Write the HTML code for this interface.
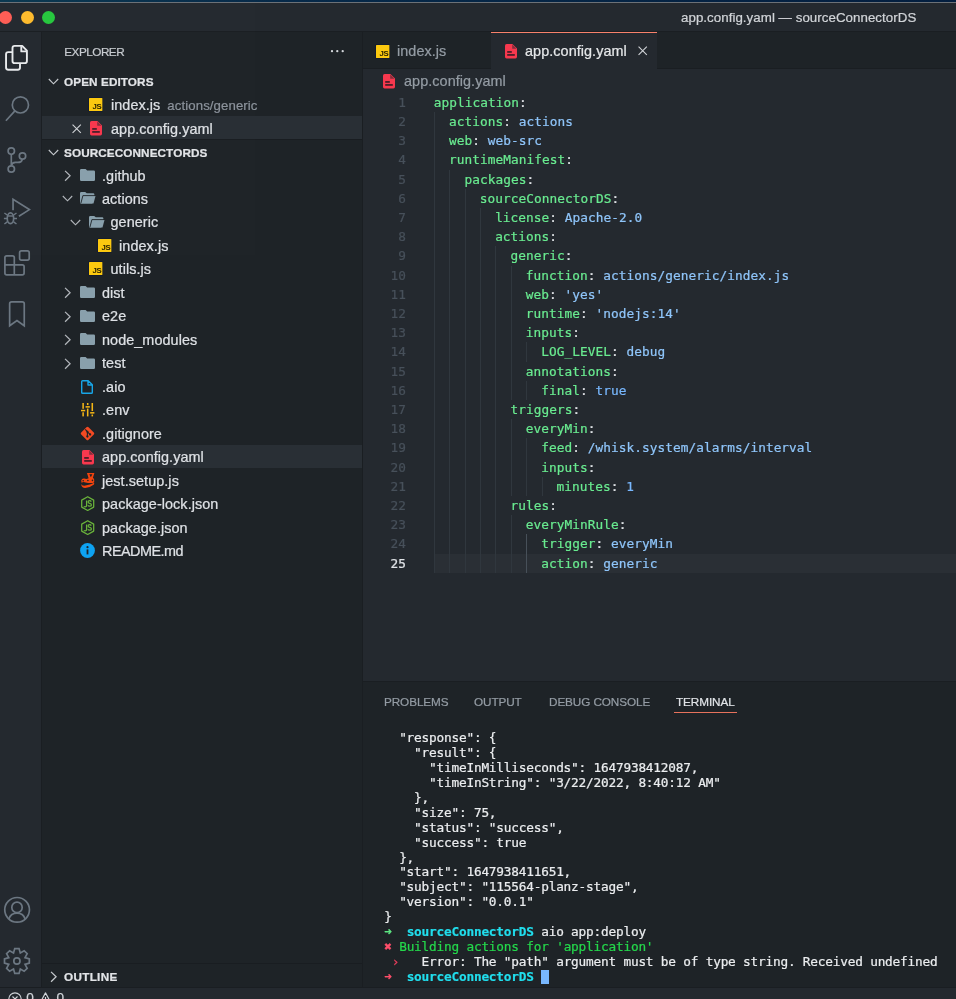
<!DOCTYPE html>
<html lang="en">
<head>
<meta charset="utf-8">
<title>app.config.yaml — sourceConnectorDS</title>
<style>
html,body{margin:0;padding:0;}
body{width:956px;height:999px;overflow:hidden;position:relative;background:#252a30;font-family:"Liberation Sans",sans-serif;font-size:14.4px;letter-spacing:.07px;color:#dfe2e6;-webkit-text-stroke:.22px;}
div,svg{position:absolute;box-sizing:border-box;}
#root{left:0;top:0;width:956px;height:999px;overflow:hidden;will-change:transform;opacity:.999;}
span{position:static;}
.ic{display:block;overflow:visible;}
#deskbg{left:0;top:0;width:956px;height:2px;background:linear-gradient(90deg,#0b3a52 0%,#072a4a 30%,#041f40 100%);}
#winedge{left:0;top:2px;width:956px;height:1px;background:#6d7278;}
#title{left:0;top:3px;width:956px;height:28px;background:#252a30;}
#titleline{left:0;top:31px;width:956px;height:1px;background:#1b1f23;}
#title .tt{left:681px;top:.5px;height:29px;line-height:28px;white-space:nowrap;color:#d2d5d9;font-size:13.3px;letter-spacing:.05px;}
.tl-dot{width:13px;height:13px;border-radius:50%;top:7.7px;}
#act{left:0;top:32px;width:42px;height:955px;background:#252a30;border-right:1px solid #1b1f23;}
#side{left:42px;top:32px;width:320px;height:955px;background:#1f2428;}
#sideitems{left:0;top:0;width:362px;height:999px;}
#vline{left:362px;top:32px;width:1px;height:955px;background:#1b1f23;}
#tabs{left:363px;top:32px;width:593px;height:37px;background:#1f2428;}
#tabline{left:363px;top:68px;width:593px;height:1px;background:#1b1f23;}
#tab2{left:491px;top:32px;width:166px;height:37.4px;background:#252a30;border-top:1.4px solid #f9826c;}
.tabt{top:33.1px;height:37px;line-height:37px;white-space:nowrap;}
#editor{left:363px;top:69px;width:593px;height:612px;background:#252a30;}
.bc{left:404px;top:70.4px;height:23.47px;line-height:23.47px;color:#959da5;white-space:nowrap;}
#panel{left:363px;top:681px;width:593px;height:306px;background:#1f2428;border-top:1px solid #1b1f23;}
.pt{top:681px;height:40px;line-height:41px;font-size:11.73px;color:#959da5;white-space:nowrap;letter-spacing:-.08px;}
.pt.on{color:#e1e4e8;}
#punder{left:674px;top:711.7px;width:62.6px;height:1.7px;background:#e8735d;}
#status{left:0;top:987px;width:956px;height:12px;background:#252a30;border-top:1px solid #1b1f23;}
.hdr{height:37.33px;line-height:37.33px;font-size:11.73px;color:#c9cdd2;white-space:nowrap;letter-spacing:-.5px;}
.dots{height:37.33px;line-height:35px;font-size:15px;color:#c9cdd2;letter-spacing:1px;font-weight:700;}
.sec{height:23.47px;line-height:23.47px;font-size:11.73px;font-weight:700;color:#e3e5e8;white-space:nowrap;letter-spacing:.1px;}
.t{height:23.47px;line-height:23.47px;white-space:nowrap;color:#dfe2e6;}
.rd{letter-spacing:-.5px;}
.desc{font-size:13.2px;letter-spacing:.1px;color:#8d949d;margin-left:7px;}
.sel{left:42px;width:320px;height:23.47px;background:#2a3036;}
.oline{left:42px;width:320px;height:1px;background:#1a1e22;}
.jsi{width:13.2px;height:12.6px;background:#fcc419;border-radius:1px;box-shadow:0 0 0 .6px #141a33;}
.jsi span{position:absolute;right:.6px;bottom:.3px;font-size:7.6px;line-height:7px;font-weight:700;color:#3a2c00;letter-spacing:-.5px;}
.ln{left:363px;width:43px;height:19.20px;line-height:19.20px;text-align:right;color:#48515b;font-family:"DejaVu Sans Mono","Liberation Mono",monospace;font-size:12.75px;}
.ln.cur{color:#e1e4e8;}
.cl{height:19.20px;line-height:19.20px;white-space:pre;font-family:"DejaVu Sans Mono","Liberation Mono",monospace;font-size:12.75px;}
.k{color:#6aec91;}
.p{color:#e1e4e8;}
.v{color:#90c6fb;}
.c{color:#79b8ff;}
.guide{width:1px;height:19.20px;background:#31383f;}
.guide.ga{background:#48515a;}
.curline{left:434px;width:522px;height:19.20px;background:#2b3036;}
.tl{left:384.2px;height:14.93px;line-height:14.93px;white-space:pre;font-family:"DejaVu Sans Mono","Liberation Mono",monospace;font-size:12.75px;letter-spacing:-.2px;color:#eceef0;}
.tg{color:#5fe884;}
.tr{color:#ff4f6b;}
.tr2{color:#ea3f5e;}
.tc{color:#22dfee;font-weight:700;}
.tgr{color:#25d94c;}
.cursor{display:inline-block;width:7.7px;height:14.5px;background:#79b8ff;vertical-align:top;}
</style>
</head>
<body>
<div id="root">
<div id="deskbg"></div>
<div id="winedge"></div>
<div id="titleline"></div>
<div id="title">
  <div class="tl-dot" style="left:-.6px;background:#fe5f57"></div>
  <div class="tl-dot" style="left:20.5px;background:#febc2e"></div>
  <div class="tl-dot" style="left:42px;background:#28c840"></div>
  <div class="tt">app.config.yaml — sourceConnectorDS</div>
</div>
<div id="act"></div>
<div id="side"></div>
<div id="vline"></div>
<div id="actitems" style="left:0;top:0;width:42px;height:999px">
<svg class="ic" style="left:0;top:0" width="42" height="999" viewBox="0 0 42 999" fill="none" stroke-width="1.7" stroke-linejoin="round">
<g stroke="#e9ebed" stroke-width="1.9"><path d="M14.7 45.9 H22.2 L26.9 50.6 V60.9 Q26.9 63.1 24.7 63.1 H14.7 Q12.5 63.1 12.5 60.9 V48.1 Q12.5 45.9 14.7 45.9 Z"/><path d="M21.3 46.3 V51.4 H26.5"/><path d="M12.3 52.1 H8.3 Q6.05 52.1 6.05 54.3 V67.5 Q6.05 69.7 8.3 69.7 H17.8 Q20 69.7 20 67.5 V63.3"/></g>
<g stroke="#6d7883">
<circle cx="20.4" cy="104.9" r="8.1"/><path d="M14.9 110.9 L5.9 120.8"/>
<circle cx="11.3" cy="151.1" r="3.2"/><circle cx="11.3" cy="169" r="3.2"/><circle cx="22.5" cy="156" r="3.2"/><path d="M11.3 154.3 V165.8 M22.3 159.2 Q21.6 162.4 17.8 162.4 H15.4 Q12 162.6 11.4 165.6"/>
<path d="M13.05 210.2 V199.3 L29.4 209.6 L18.9 216.3" stroke-linejoin="miter"/><ellipse cx="10.45" cy="218.3" rx="3.2" ry="5.4"/><path d="M7.4 216 H13.5" stroke-width="1.4"/><path d="M7.2 215 L4.4 213 M13.7 215 L16.5 213 M7.1 218.6 H3.9 M13.8 218.6 H17 M7.3 221.8 L4.4 224 M13.6 221.8 L16.5 224" stroke-width="1.5"/>
<path d="M6.7 255.8 H12.5 Q14.3 255.8 14.3 257.6 V264.8 H22.3 Q24.1 264.8 24.1 266.6 V273 Q24.1 274.8 22.3 274.8 H6.7 Q4.9 274.8 4.9 273 V257.6 Q4.9 255.8 6.7 255.8 Z M14.3 264.8 V274.8 M4.9 264.8 H14.3"/><rect x="19.6" y="250.9" width="9.6" height="9.2" rx="1.8"/>
<path d="M11.65 301.8 H22.25 Q24.25 301.8 24.25 303.8 V325.8 L16.95 320.6 L9.65 325.8 V303.8 Q9.65 301.8 11.65 301.8 Z" stroke-linejoin="miter"/>
<circle cx="17.1" cy="909.85" r="12.35"/><circle cx="17" cy="907.4" r="5.2"/><path d="M8.9 918.9 Q10.8 913.1 17 913.1 Q23.2 913.1 25.1 918.9"/>
<path d="M20.27 969.13 L19.05 973.40 L14.75 973.40 L13.53 969.13 L9.65 971.29 L6.61 968.25 L8.77 964.37 L4.50 963.15 L4.50 958.85 L8.77 957.63 L6.61 953.75 L9.65 950.71 L13.53 952.87 L14.75 948.60 L19.05 948.60 L20.27 952.87 L24.15 950.71 L27.19 953.75 L25.03 957.63 L29.30 958.85 L29.30 963.15 L25.03 964.37 L27.19 968.25 L24.15 971.29 Z" stroke-linejoin="miter"/><circle cx="16.9" cy="961" r="3.1"/>
</g></svg>
</div>
<div id="sideitems">
<div class="hdr" style="left:64.3px;top:32.6px">EXPLORER</div>
<svg class="ic" style="left:329px;top:48px" width="18" height="6" viewBox="0 0 18 6"><circle cx="3" cy="3.2" r="1.15" fill="#d6d9dd"/><circle cx="8.3" cy="3.2" r="1.15" fill="#d6d9dd"/><circle cx="13.7" cy="3.2" r="1.15" fill="#d6d9dd"/></svg>
<svg class="ic" style="left:48.1px;top:78.46666666666668px" width="11" height="7" viewBox="0 0 11 7"><path d="M0.8 1 L5.5 5.8 L10.2 1" fill="none" stroke="#c8ccd0" stroke-width="1.15"/></svg>
<div class="sec" style="left:64px;top:70.03px">OPEN EDITORS</div>
<svg class="ic" style="left:89.3px;top:97.73333333333335px" width="13.4" height="13" viewBox="0 0 13.4 13"><rect x="-.55" y="-.55" width="14.5" height="14.1" rx=".8" fill="#0d1733"/><rect x="0" y="0" width="13.4" height="13" rx=".5" fill="#fdca10"/><text x="8.05" y="11.5" font-family="Liberation Sans, sans-serif" font-size="7.8" font-weight="700" text-anchor="middle" fill="#2b2400" style="-webkit-text-stroke:0;letter-spacing:-.3px">JS</text></svg>
<div class="t" style="left:111px;top:94.10px">index.js<span class="desc">actions/generic</span></div>
<div class="sel" style="top:116.27px"></div>
<svg class="ic" style="left:72px;top:123.7px" width="9.4" height="9.4" viewBox="0 0 10 10"><path d="M0.6 0.6 L9.4 9.4 M9.4 0.6 L0.6 9.4" fill="none" stroke="#d0d3d7" stroke-width="1.2"/></svg>
<svg class="ic" style="left:90px;top:120.8px" width="12" height="14.4" viewBox="0 0 12 14.4"><path d="M1.6 0 H7.4 L12 4.6 V12.8 Q12 14.4 10.4 14.4 H1.6 Q0 14.4 0 12.8 V1.6 Q0 0 1.6 0 Z" fill="#f8394f"/><path d="M7.2 0.6 V4.8 H11.4 Z" fill="#252a30" opacity=".55"/><rect x="2.2" y="7.2" width="4.6" height="1.5" fill="#2a1a22"/><rect x="2.2" y="10.2" width="7.6" height="1.5" fill="#2a1a22"/></svg>
<div class="t" style="left:111px;top:117.57px">app.config.yaml</div>
<svg class="ic" style="left:48.1px;top:149.06666666666666px" width="11" height="7" viewBox="0 0 11 7"><path d="M0.8 1 L5.5 5.8 L10.2 1" fill="none" stroke="#c8ccd0" stroke-width="1.15"/></svg>
<div class="oline" style="top:139.33px"></div>
<div class="sec" style="left:64px;top:141.33px">SOURCECONNECTORDS</div>
<svg class="ic" style="left:63.7px;top:169.83333333333331px" width="7.4" height="11.6" viewBox="0 0 7 11"><path d="M1 0.8 L5.8 5.5 L1 10.2" fill="none" stroke="#b4b8bd" stroke-width="1.15"/></svg>
<svg class="ic" style="left:80.0px;top:168.9333333333333px" width="15" height="12" viewBox="0 0 15 12"><path d="M1.2 0 H5.6 L7.2 1.6 H13.8 Q15 1.6 15 2.8 V10.8 Q15 12 13.8 12 H1.2 Q0 12 0 10.8 V1.2 Q0 0 1.2 0 Z" fill="#8aa1ad"/></svg>
<div class="t" style="left:102.0px;top:164.50px">.github</div>
<svg class="ic" style="left:61.8px;top:195.4px" width="11" height="7" viewBox="0 0 11 7"><path d="M0.8 1 L5.5 5.8 L10.2 1" fill="none" stroke="#b4b8bd" stroke-width="1.15"/></svg>
<svg class="ic" style="left:80.0px;top:192.4px" width="16" height="12" viewBox="0 0 16 12"><path d="M1.2 0 H5.2 L6.8 1.3 H13.2 Q14.4 1.3 14.4 2.5 V10.4 Q14.4 11.6 13.2 11.6 H1.2 Q0 11.6 0 10.4 V1.2 Q0 0 1.2 0 Z" fill="#8aa1ad"/><path d="M15.2 4 H16 V12 H12 Z" fill="#1f2428"/><path d="M3.1 4 H15.5 L13.5 11.6 H1 Z" fill="#8aa1ad"/><path d="M0.9 11.2 L2.9 3.6 H15" fill="none" stroke="#1f2428" stroke-width=".9"/></svg>
<div class="t" style="left:102.0px;top:187.97px">actions</div>
<svg class="ic" style="left:70.33333333333333px;top:218.86666666666665px" width="11" height="7" viewBox="0 0 11 7"><path d="M0.8 1 L5.5 5.8 L10.2 1" fill="none" stroke="#b4b8bd" stroke-width="1.15"/></svg>
<svg class="ic" style="left:88.53333333333333px;top:215.86666666666665px" width="16" height="12" viewBox="0 0 16 12"><path d="M1.2 0 H5.2 L6.8 1.3 H13.2 Q14.4 1.3 14.4 2.5 V10.4 Q14.4 11.6 13.2 11.6 H1.2 Q0 11.6 0 10.4 V1.2 Q0 0 1.2 0 Z" fill="#8aa1ad"/><path d="M15.2 4 H16 V12 H12 Z" fill="#1f2428"/><path d="M3.1 4 H15.5 L13.5 11.6 H1 Z" fill="#8aa1ad"/><path d="M0.9 11.2 L2.9 3.6 H15" fill="none" stroke="#1f2428" stroke-width=".9"/></svg>
<div class="t" style="left:110.53333333333333px;top:211.43px">generic</div>
<svg class="ic" style="left:97.66666666666666px;top:238.9333333333333px" width="13.4" height="13" viewBox="0 0 13.4 13"><rect x="-.55" y="-.55" width="14.5" height="14.1" rx=".8" fill="#0d1733"/><rect x="0" y="0" width="13.4" height="13" rx=".5" fill="#fdca10"/><text x="8.05" y="11.5" font-family="Liberation Sans, sans-serif" font-size="7.8" font-weight="700" text-anchor="middle" fill="#2b2400" style="-webkit-text-stroke:0;letter-spacing:-.3px">JS</text></svg>
<div class="t" style="left:119.06666666666666px;top:234.90px">index.js</div>
<svg class="ic" style="left:89.13333333333333px;top:262.40000000000003px" width="13.4" height="13" viewBox="0 0 13.4 13"><rect x="-.55" y="-.55" width="14.5" height="14.1" rx=".8" fill="#0d1733"/><rect x="0" y="0" width="13.4" height="13" rx=".5" fill="#fdca10"/><text x="8.05" y="11.5" font-family="Liberation Sans, sans-serif" font-size="7.8" font-weight="700" text-anchor="middle" fill="#2b2400" style="-webkit-text-stroke:0;letter-spacing:-.3px">JS</text></svg>
<div class="t" style="left:110.53333333333333px;top:258.37px">utils.js</div>
<svg class="ic" style="left:63.7px;top:287.16666666666663px" width="7.4" height="11.6" viewBox="0 0 7 11"><path d="M1 0.8 L5.8 5.5 L1 10.2" fill="none" stroke="#b4b8bd" stroke-width="1.15"/></svg>
<svg class="ic" style="left:80.0px;top:286.26666666666665px" width="15" height="12" viewBox="0 0 15 12"><path d="M1.2 0 H5.6 L7.2 1.6 H13.8 Q15 1.6 15 2.8 V10.8 Q15 12 13.8 12 H1.2 Q0 12 0 10.8 V1.2 Q0 0 1.2 0 Z" fill="#8aa1ad"/></svg>
<div class="t" style="left:102.0px;top:281.83px">dist</div>
<svg class="ic" style="left:63.7px;top:310.6333333333333px" width="7.4" height="11.6" viewBox="0 0 7 11"><path d="M1 0.8 L5.8 5.5 L1 10.2" fill="none" stroke="#b4b8bd" stroke-width="1.15"/></svg>
<svg class="ic" style="left:80.0px;top:309.73333333333335px" width="15" height="12" viewBox="0 0 15 12"><path d="M1.2 0 H5.6 L7.2 1.6 H13.8 Q15 1.6 15 2.8 V10.8 Q15 12 13.8 12 H1.2 Q0 12 0 10.8 V1.2 Q0 0 1.2 0 Z" fill="#8aa1ad"/></svg>
<div class="t" style="left:102.0px;top:305.30px">e2e</div>
<svg class="ic" style="left:63.7px;top:334.1px" width="7.4" height="11.6" viewBox="0 0 7 11"><path d="M1 0.8 L5.8 5.5 L1 10.2" fill="none" stroke="#b4b8bd" stroke-width="1.15"/></svg>
<svg class="ic" style="left:80.0px;top:333.20000000000005px" width="15" height="12" viewBox="0 0 15 12"><path d="M1.2 0 H5.6 L7.2 1.6 H13.8 Q15 1.6 15 2.8 V10.8 Q15 12 13.8 12 H1.2 Q0 12 0 10.8 V1.2 Q0 0 1.2 0 Z" fill="#8aa1ad"/></svg>
<div class="t" style="left:102.0px;top:328.77px">node_modules</div>
<svg class="ic" style="left:63.7px;top:357.5666666666666px" width="7.4" height="11.6" viewBox="0 0 7 11"><path d="M1 0.8 L5.8 5.5 L1 10.2" fill="none" stroke="#b4b8bd" stroke-width="1.15"/></svg>
<svg class="ic" style="left:80.0px;top:356.66666666666663px" width="15" height="12" viewBox="0 0 15 12"><path d="M1.2 0 H5.6 L7.2 1.6 H13.8 Q15 1.6 15 2.8 V10.8 Q15 12 13.8 12 H1.2 Q0 12 0 10.8 V1.2 Q0 0 1.2 0 Z" fill="#8aa1ad"/></svg>
<div class="t" style="left:102.0px;top:352.23px">test</div>
<svg class="ic" style="left:81.2px;top:379.93333333333334px" width="12" height="14" viewBox="0 0 12 14"><path d="M1.6 0.7 H7.2 L11.3 4.8 V12.4 Q11.3 13.3 10.4 13.3 H1.6 Q0.7 13.3 0.7 12.4 V1.6 Q0.7 0.7 1.6 0.7 Z M7 0.9 V5 H11.1" fill="none" stroke="#19a7e8" stroke-width="1.4" stroke-linejoin="round"/></svg>
<div class="t" style="left:102.0px;top:375.70px">.aio</div>
<svg class="ic" style="left:80.5px;top:403.3px" width="13.4" height="13.4" viewBox="0 0 13 13"><g fill="#f5b616"><rect x="1.3" y="0" width="1.5" height="5.6"/><rect x="1.3" y="9" width="1.5" height="4"/><rect x="0" y="6.6" width="4.1" height="1.5"/><rect x="5.75" y="0" width="1.5" height="2"/><rect x="5.75" y="5.4" width="1.5" height="7.6"/><rect x="4.45" y="3" width="4.1" height="1.5"/><rect x="10.2" y="0" width="1.5" height="7.8"/><rect x="10.2" y="11.2" width="1.5" height="1.8"/><rect x="8.9" y="8.8" width="4.1" height="1.5"/></g></svg>
<div class="t" style="left:102.0px;top:399.17px">.env</div>
<svg class="ic" style="left:79.95px;top:425.86666666666673px" width="15" height="15" viewBox="0 0 15 15"><rect x="2.3" y="2.3" width="10.4" height="10.4" rx="1.5" transform="rotate(45 7.5 7.5)" fill="#f44b24"/><path d="M5.2 3.4 L7.4 5.6 V10.6 M7.5 5.9 L10 8.4" stroke="#1f2428" stroke-width="1.1" fill="none"/><circle cx="7.4" cy="5.8" r="1.15" fill="#1f2428"/><circle cx="7.4" cy="10.5" r="1.15" fill="#1f2428"/><circle cx="10.1" cy="8.5" r="1.15" fill="#1f2428"/></svg>
<div class="t" style="left:102.0px;top:422.63px">.gitignore</div>
<div class="sel" style="top:444.80px"></div>
<svg class="ic" style="left:81.5px;top:450.2333333333333px" width="12" height="14.4" viewBox="0 0 12 14.4"><path d="M1.6 0 H7.4 L12 4.6 V12.8 Q12 14.4 10.4 14.4 H1.6 Q0 14.4 0 12.8 V1.6 Q0 0 1.6 0 Z" fill="#f8394f"/><path d="M7.2 0.6 V4.8 H11.4 Z" fill="#252a30" opacity=".55"/><rect x="2.2" y="7.2" width="4.6" height="1.5" fill="#2a1a22"/><rect x="2.2" y="10.2" width="7.6" height="1.5" fill="#2a1a22"/></svg>
<div class="t" style="left:102.0px;top:446.10px">app.config.yaml</div>
<svg class="ic" style="left:80.6px;top:472.7px" width="13.6" height="15" viewBox="0 0 13.6 15"><path d="M6 0 H13.4 L11.9 4.8 Q13.5 5.6 13.3 8.2 Q13.1 9.7 12 10 Q8 10.4 4.6 9.4 Q2 8.6 0.6 9.8 L0.2 7.4 Q1 5 3.4 5.6 Q5.6 6.6 7.6 5.2 Z" fill="#f4450f"/><path d="M0.2 11 Q1 13.2 4.4 12.6 Q9 11.8 13.3 9.8 L13 11.6 Q9.4 14.6 4.2 15 Q0.4 15 0.2 11 Z" fill="#f4450f"/><circle cx="2.2" cy="7.7" r=".8" fill="#1f2428"/><circle cx="6.9" cy="7.5" r=".8" fill="#1f2428"/><circle cx="11.5" cy="7.4" r=".8" fill="#1f2428"/><path d="M8.3 1.2 H11.4 L9.85 4.3 Z" fill="#1f2428"/></svg>
<div class="t" style="left:102.0px;top:469.57px">jest.setup.js</div>
<svg class="ic" style="left:80.7px;top:496.4666666666667px" width="13.4" height="15.2" viewBox="0 0 13.4 15.2"><path d="M6.7 0.7 L12.7 4.1 V11.1 L6.7 14.5 L0.7 11.1 V4.1 Z" fill="none" stroke="#6bb53c" stroke-width="1.25" stroke-linejoin="round"/><path d="M5.6 4.6 V9.6 Q5.6 11 4.2 11 Q3.4 11 2.9 10.4" fill="none" stroke="#6bb53c" stroke-width="1.25"/><path d="M10.3 5.6 Q9.8 4.7 8.6 4.7 Q7.1 4.7 7.1 6 Q7.1 7.1 8.7 7.4 Q10.4 7.7 10.4 8.9 Q10.4 10.2 8.7 10.2 Q7.3 10.2 6.9 9.2" fill="none" stroke="#6bb53c" stroke-width="1.25"/></svg>
<div class="t" style="left:102.0px;top:493.03px">package-lock.json</div>
<svg class="ic" style="left:80.7px;top:519.9333333333333px" width="13.4" height="15.2" viewBox="0 0 13.4 15.2"><path d="M6.7 0.7 L12.7 4.1 V11.1 L6.7 14.5 L0.7 11.1 V4.1 Z" fill="none" stroke="#6bb53c" stroke-width="1.25" stroke-linejoin="round"/><path d="M5.6 4.6 V9.6 Q5.6 11 4.2 11 Q3.4 11 2.9 10.4" fill="none" stroke="#6bb53c" stroke-width="1.25"/><path d="M10.3 5.6 Q9.8 4.7 8.6 4.7 Q7.1 4.7 7.1 6 Q7.1 7.1 8.7 7.4 Q10.4 7.7 10.4 8.9 Q10.4 10.2 8.7 10.2 Q7.3 10.2 6.9 9.2" fill="none" stroke="#6bb53c" stroke-width="1.25"/></svg>
<div class="t" style="left:102.0px;top:516.50px">package.json</div>
<svg class="ic" style="left:79.95px;top:543.4px" width="15" height="15" viewBox="0 0 15 15"><circle cx="7.5" cy="7.5" r="7.4" fill="#0fa4f3"/><rect x="6.6" y="6.4" width="1.8" height="5" fill="#1f2428"/><circle cx="7.5" cy="4.2" r="1.1" fill="#1f2428"/></svg>
<div class="t rd" style="left:102.0px;top:539.97px">README.md</div>
<div class="oline" style="top:963px"></div>
<svg class="ic" style="left:50px;top:970.5px" width="7.4" height="11.6" viewBox="0 0 7 11"><path d="M1 0.8 L5.8 5.5 L1 10.2" fill="none" stroke="#c8ccd0" stroke-width="1.15"/></svg>
<div class="sec" style="left:64px;top:964.57px;letter-spacing:.3px">OUTLINE</div>
</div>
<div id="tabs"></div>
<div id="tabline"></div>
<svg class="ic" style="left:375.9px;top:44.5px" width="13.4" height="13" viewBox="0 0 13.4 13"><rect x="-.55" y="-.55" width="14.5" height="14.1" rx=".8" fill="#0d1733"/><rect x="0" y="0" width="13.4" height="13" rx=".5" fill="#fdca10"/><text x="8.05" y="11.5" font-family="Liberation Sans, sans-serif" font-size="7.8" font-weight="700" text-anchor="middle" fill="#2b2400" style="-webkit-text-stroke:0;letter-spacing:-.3px">JS</text></svg>
<div class="tabt" style="left:397px;color:#959da5">index.js</div>
<div id="tab2"></div>
<svg class="ic" style="left:505px;top:43.5px" width="12" height="14.4" viewBox="0 0 12 14.4"><path d="M1.6 0 H7.4 L12 4.6 V12.8 Q12 14.4 10.4 14.4 H1.6 Q0 14.4 0 12.8 V1.6 Q0 0 1.6 0 Z" fill="#f8394f"/><path d="M7.2 0.6 V4.8 H11.4 Z" fill="#252a30" opacity=".55"/><rect x="2.2" y="7.2" width="4.6" height="1.5" fill="#2a1a22"/><rect x="2.2" y="10.2" width="7.6" height="1.5" fill="#2a1a22"/></svg>
<div class="tabt" style="left:525px;color:#e6e8ea">app.config.yaml</div>
<svg class="ic" style="left:637.5px;top:46px" width="9.4" height="9.4" viewBox="0 0 10 10"><path d="M0.6 0.6 L9.4 9.4 M9.4 0.6 L0.6 9.4" fill="none" stroke="#d0d3d7" stroke-width="1.2"/></svg>
<div id="editor"></div>
<svg class="ic" style="left:383px;top:74px" width="12" height="14.4" viewBox="0 0 12 14.4"><path d="M1.6 0 H7.4 L12 4.6 V12.8 Q12 14.4 10.4 14.4 H1.6 Q0 14.4 0 12.8 V1.6 Q0 0 1.6 0 Z" fill="#f8394f"/><path d="M7.2 0.6 V4.8 H11.4 Z" fill="#252a30" opacity=".55"/><rect x="2.2" y="7.2" width="4.6" height="1.5" fill="#2a1a22"/><rect x="2.2" y="10.2" width="7.6" height="1.5" fill="#2a1a22"/></svg>
<div class="bc">app.config.yaml</div>
<div class="ln" style="top:92.80px">1</div>
<div class="cl" style="left:433.70px;top:92.80px"><span class="k">application</span><span class="p">:</span></div>
<div class="ln" style="top:112.00px">2</div>
<div class="guide" style="left:434.00px;top:112.00px"></div>
<div class="cl" style="left:449.06px;top:112.00px"><span class="k">actions</span><span class="p">:</span> <span class="v">actions</span></div>
<div class="ln" style="top:131.20px">3</div>
<div class="guide" style="left:434.00px;top:131.20px"></div>
<div class="cl" style="left:449.06px;top:131.20px"><span class="k">web</span><span class="p">:</span> <span class="v">web-src</span></div>
<div class="ln" style="top:150.40px">4</div>
<div class="guide" style="left:434.00px;top:150.40px"></div>
<div class="cl" style="left:449.06px;top:150.40px"><span class="k">runtimeManifest</span><span class="p">:</span></div>
<div class="ln" style="top:169.60px">5</div>
<div class="guide" style="left:434.00px;top:169.60px"></div>
<div class="guide" style="left:449.36px;top:169.60px"></div>
<div class="cl" style="left:464.42px;top:169.60px"><span class="k">packages</span><span class="p">:</span></div>
<div class="ln" style="top:188.80px">6</div>
<div class="guide" style="left:434.00px;top:188.80px"></div>
<div class="guide" style="left:449.36px;top:188.80px"></div>
<div class="guide" style="left:464.72px;top:188.80px"></div>
<div class="cl" style="left:479.78px;top:188.80px"><span class="k">sourceConnectorDS</span><span class="p">:</span></div>
<div class="ln" style="top:208.00px">7</div>
<div class="guide" style="left:434.00px;top:208.00px"></div>
<div class="guide" style="left:449.36px;top:208.00px"></div>
<div class="guide" style="left:464.72px;top:208.00px"></div>
<div class="guide" style="left:480.08px;top:208.00px"></div>
<div class="cl" style="left:495.14px;top:208.00px"><span class="k">license</span><span class="p">:</span> <span class="v">Apache-2.0</span></div>
<div class="ln" style="top:227.20px">8</div>
<div class="guide" style="left:434.00px;top:227.20px"></div>
<div class="guide" style="left:449.36px;top:227.20px"></div>
<div class="guide" style="left:464.72px;top:227.20px"></div>
<div class="guide" style="left:480.08px;top:227.20px"></div>
<div class="cl" style="left:495.14px;top:227.20px"><span class="k">actions</span><span class="p">:</span></div>
<div class="ln" style="top:246.40px">9</div>
<div class="guide" style="left:434.00px;top:246.40px"></div>
<div class="guide" style="left:449.36px;top:246.40px"></div>
<div class="guide" style="left:464.72px;top:246.40px"></div>
<div class="guide" style="left:480.08px;top:246.40px"></div>
<div class="guide" style="left:495.44px;top:246.40px"></div>
<div class="cl" style="left:510.50px;top:246.40px"><span class="k">generic</span><span class="p">:</span></div>
<div class="ln" style="top:265.60px">10</div>
<div class="guide" style="left:434.00px;top:265.60px"></div>
<div class="guide" style="left:449.36px;top:265.60px"></div>
<div class="guide" style="left:464.72px;top:265.60px"></div>
<div class="guide" style="left:480.08px;top:265.60px"></div>
<div class="guide" style="left:495.44px;top:265.60px"></div>
<div class="guide" style="left:510.80px;top:265.60px"></div>
<div class="cl" style="left:525.86px;top:265.60px"><span class="k">function</span><span class="p">:</span> <span class="v">actions/generic/index.js</span></div>
<div class="ln" style="top:284.80px">11</div>
<div class="guide" style="left:434.00px;top:284.80px"></div>
<div class="guide" style="left:449.36px;top:284.80px"></div>
<div class="guide" style="left:464.72px;top:284.80px"></div>
<div class="guide" style="left:480.08px;top:284.80px"></div>
<div class="guide" style="left:495.44px;top:284.80px"></div>
<div class="guide" style="left:510.80px;top:284.80px"></div>
<div class="cl" style="left:525.86px;top:284.80px"><span class="k">web</span><span class="p">:</span> <span class="v">'yes'</span></div>
<div class="ln" style="top:304.00px">12</div>
<div class="guide" style="left:434.00px;top:304.00px"></div>
<div class="guide" style="left:449.36px;top:304.00px"></div>
<div class="guide" style="left:464.72px;top:304.00px"></div>
<div class="guide" style="left:480.08px;top:304.00px"></div>
<div class="guide" style="left:495.44px;top:304.00px"></div>
<div class="guide" style="left:510.80px;top:304.00px"></div>
<div class="cl" style="left:525.86px;top:304.00px"><span class="k">runtime</span><span class="p">:</span> <span class="v">'nodejs:14'</span></div>
<div class="ln" style="top:323.20px">13</div>
<div class="guide" style="left:434.00px;top:323.20px"></div>
<div class="guide" style="left:449.36px;top:323.20px"></div>
<div class="guide" style="left:464.72px;top:323.20px"></div>
<div class="guide" style="left:480.08px;top:323.20px"></div>
<div class="guide" style="left:495.44px;top:323.20px"></div>
<div class="guide" style="left:510.80px;top:323.20px"></div>
<div class="cl" style="left:525.86px;top:323.20px"><span class="k">inputs</span><span class="p">:</span></div>
<div class="ln" style="top:342.40px">14</div>
<div class="guide" style="left:434.00px;top:342.40px"></div>
<div class="guide" style="left:449.36px;top:342.40px"></div>
<div class="guide" style="left:464.72px;top:342.40px"></div>
<div class="guide" style="left:480.08px;top:342.40px"></div>
<div class="guide" style="left:495.44px;top:342.40px"></div>
<div class="guide" style="left:510.80px;top:342.40px"></div>
<div class="guide" style="left:526.16px;top:342.40px"></div>
<div class="cl" style="left:541.22px;top:342.40px"><span class="k">LOG_LEVEL</span><span class="p">:</span> <span class="v">debug</span></div>
<div class="ln" style="top:361.60px">15</div>
<div class="guide" style="left:434.00px;top:361.60px"></div>
<div class="guide" style="left:449.36px;top:361.60px"></div>
<div class="guide" style="left:464.72px;top:361.60px"></div>
<div class="guide" style="left:480.08px;top:361.60px"></div>
<div class="guide" style="left:495.44px;top:361.60px"></div>
<div class="guide" style="left:510.80px;top:361.60px"></div>
<div class="cl" style="left:525.86px;top:361.60px"><span class="k">annotations</span><span class="p">:</span></div>
<div class="ln" style="top:380.80px">16</div>
<div class="guide" style="left:434.00px;top:380.80px"></div>
<div class="guide" style="left:449.36px;top:380.80px"></div>
<div class="guide" style="left:464.72px;top:380.80px"></div>
<div class="guide" style="left:480.08px;top:380.80px"></div>
<div class="guide" style="left:495.44px;top:380.80px"></div>
<div class="guide" style="left:510.80px;top:380.80px"></div>
<div class="guide" style="left:526.16px;top:380.80px"></div>
<div class="cl" style="left:541.22px;top:380.80px"><span class="k">final</span><span class="p">:</span> <span class="c">true</span></div>
<div class="ln" style="top:400.00px">17</div>
<div class="guide" style="left:434.00px;top:400.00px"></div>
<div class="guide" style="left:449.36px;top:400.00px"></div>
<div class="guide" style="left:464.72px;top:400.00px"></div>
<div class="guide" style="left:480.08px;top:400.00px"></div>
<div class="guide" style="left:495.44px;top:400.00px"></div>
<div class="cl" style="left:510.50px;top:400.00px"><span class="k">triggers</span><span class="p">:</span></div>
<div class="ln" style="top:419.20px">18</div>
<div class="guide" style="left:434.00px;top:419.20px"></div>
<div class="guide" style="left:449.36px;top:419.20px"></div>
<div class="guide" style="left:464.72px;top:419.20px"></div>
<div class="guide" style="left:480.08px;top:419.20px"></div>
<div class="guide" style="left:495.44px;top:419.20px"></div>
<div class="guide" style="left:510.80px;top:419.20px"></div>
<div class="cl" style="left:525.86px;top:419.20px"><span class="k">everyMin</span><span class="p">:</span></div>
<div class="ln" style="top:438.40px">19</div>
<div class="guide" style="left:434.00px;top:438.40px"></div>
<div class="guide" style="left:449.36px;top:438.40px"></div>
<div class="guide" style="left:464.72px;top:438.40px"></div>
<div class="guide" style="left:480.08px;top:438.40px"></div>
<div class="guide" style="left:495.44px;top:438.40px"></div>
<div class="guide" style="left:510.80px;top:438.40px"></div>
<div class="guide" style="left:526.16px;top:438.40px"></div>
<div class="cl" style="left:541.22px;top:438.40px"><span class="k">feed</span><span class="p">:</span> <span class="v">/whisk.system/alarms/interval</span></div>
<div class="ln" style="top:457.60px">20</div>
<div class="guide" style="left:434.00px;top:457.60px"></div>
<div class="guide" style="left:449.36px;top:457.60px"></div>
<div class="guide" style="left:464.72px;top:457.60px"></div>
<div class="guide" style="left:480.08px;top:457.60px"></div>
<div class="guide" style="left:495.44px;top:457.60px"></div>
<div class="guide" style="left:510.80px;top:457.60px"></div>
<div class="guide" style="left:526.16px;top:457.60px"></div>
<div class="cl" style="left:541.22px;top:457.60px"><span class="k">inputs</span><span class="p">:</span></div>
<div class="ln" style="top:476.80px">21</div>
<div class="guide" style="left:434.00px;top:476.80px"></div>
<div class="guide" style="left:449.36px;top:476.80px"></div>
<div class="guide" style="left:464.72px;top:476.80px"></div>
<div class="guide" style="left:480.08px;top:476.80px"></div>
<div class="guide" style="left:495.44px;top:476.80px"></div>
<div class="guide" style="left:510.80px;top:476.80px"></div>
<div class="guide" style="left:526.16px;top:476.80px"></div>
<div class="guide" style="left:541.52px;top:476.80px"></div>
<div class="cl" style="left:556.58px;top:476.80px"><span class="k">minutes</span><span class="p">:</span> <span class="c">1</span></div>
<div class="ln" style="top:496.00px">22</div>
<div class="guide" style="left:434.00px;top:496.00px"></div>
<div class="guide" style="left:449.36px;top:496.00px"></div>
<div class="guide" style="left:464.72px;top:496.00px"></div>
<div class="guide" style="left:480.08px;top:496.00px"></div>
<div class="guide" style="left:495.44px;top:496.00px"></div>
<div class="cl" style="left:510.50px;top:496.00px"><span class="k">rules</span><span class="p">:</span></div>
<div class="ln" style="top:515.20px">23</div>
<div class="guide" style="left:434.00px;top:515.20px"></div>
<div class="guide" style="left:449.36px;top:515.20px"></div>
<div class="guide" style="left:464.72px;top:515.20px"></div>
<div class="guide" style="left:480.08px;top:515.20px"></div>
<div class="guide" style="left:495.44px;top:515.20px"></div>
<div class="guide" style="left:510.80px;top:515.20px"></div>
<div class="cl" style="left:525.86px;top:515.20px"><span class="k">everyMinRule</span><span class="p">:</span></div>
<div class="ln" style="top:534.40px">24</div>
<div class="guide" style="left:434.00px;top:534.40px"></div>
<div class="guide" style="left:449.36px;top:534.40px"></div>
<div class="guide" style="left:464.72px;top:534.40px"></div>
<div class="guide" style="left:480.08px;top:534.40px"></div>
<div class="guide" style="left:495.44px;top:534.40px"></div>
<div class="guide" style="left:510.80px;top:534.40px"></div>
<div class="guide ga" style="left:526.16px;top:534.40px"></div>
<div class="cl" style="left:541.22px;top:534.40px"><span class="k">trigger</span><span class="p">:</span> <span class="v">everyMin</span></div>
<div class="curline" style="top:553.60px"></div>
<div class="ln cur" style="top:553.60px">25</div>
<div class="guide" style="left:434.00px;top:553.60px"></div>
<div class="guide" style="left:449.36px;top:553.60px"></div>
<div class="guide" style="left:464.72px;top:553.60px"></div>
<div class="guide" style="left:480.08px;top:553.60px"></div>
<div class="guide" style="left:495.44px;top:553.60px"></div>
<div class="guide" style="left:510.80px;top:553.60px"></div>
<div class="guide ga" style="left:526.16px;top:553.60px"></div>
<div class="cl" style="left:541.22px;top:553.60px"><span class="k">action</span><span class="p">:</span> <span class="v">generic</span></div>
<div id="panel"></div>
<div class="pt" style="left:384px">PROBLEMS</div>
<div class="pt" style="left:474px">OUTPUT</div>
<div class="pt" style="left:549px">DEBUG CONSOLE</div>
<div class="pt on" style="left:676px">TERMINAL</div>
<div id="punder"></div>
<div class="tl" style="top:731.03px">  "response": {</div>
<div class="tl" style="top:745.97px">    "result": {</div>
<div class="tl" style="top:760.90px">      "timeInMilliseconds": 1647938412087,</div>
<div class="tl" style="top:775.83px">      "timeInString": "3/22/2022, 8:40:12 AM"</div>
<div class="tl" style="top:790.77px">    },</div>
<div class="tl" style="top:805.70px">    "size": 75,</div>
<div class="tl" style="top:820.63px">    "status": "success",</div>
<div class="tl" style="top:835.57px">    "success": true</div>
<div class="tl" style="top:850.50px">  },</div>
<div class="tl" style="top:865.43px">  "start": 1647938411651,</div>
<div class="tl" style="top:880.37px">  "subject": "115564-planz-stage",</div>
<div class="tl" style="top:895.30px">  "version": "0.0.1"</div>
<div class="tl" style="top:910.23px">}</div>
<div class="tl" style="top:925.17px"><span class="tg">➜</span>  <span class="tc">sourceConnectorDS</span> aio app:deploy</div>
<div class="tl" style="top:940.10px"><span class="tr">✖</span> <span class="tgr">Building actions for 'application'</span></div>
<div class="tl" style="top:955.03px"> <span class="tr2">›</span>   Error: The "path" argument must be of type string. Received undefined</div>
<div class="tl" style="top:969.97px"><span class="tr">➜</span>  <span class="tc">sourceConnectorDS</span> <span class="cursor"></span></div>
<div id="status">
  <svg class="ic" style="left:7.6px;top:3.6px" width="14" height="14" viewBox="0 0 14 14"><circle cx="7" cy="7" r="6.2" fill="none" stroke="#d1d5da" stroke-width="1.15"/><path d="M4.5 4.5 L9.5 9.5 M9.5 4.5 L4.5 9.5" stroke="#d1d5da" stroke-width="1.15"/></svg>
  <div style="left:26.2px;top:1.8px;font-size:13.6px;line-height:15px;color:#d1d5da">0</div>
  <svg class="ic" style="left:37.7px;top:4.2px" width="15" height="14" viewBox="0 0 15 14"><path d="M7.5 0.9 L14.2 13.2 H0.8 Z" fill="none" stroke="#d1d5da" stroke-width="1.15" stroke-linejoin="round"/><path d="M7.5 5 V9.2 M7.5 10.4 V11.6" stroke="#d1d5da" stroke-width="1.15"/></svg>
  <div style="left:56.5px;top:1.8px;font-size:13.6px;line-height:15px;color:#d1d5da">0</div>
</div>
</div>
</body>
</html>
